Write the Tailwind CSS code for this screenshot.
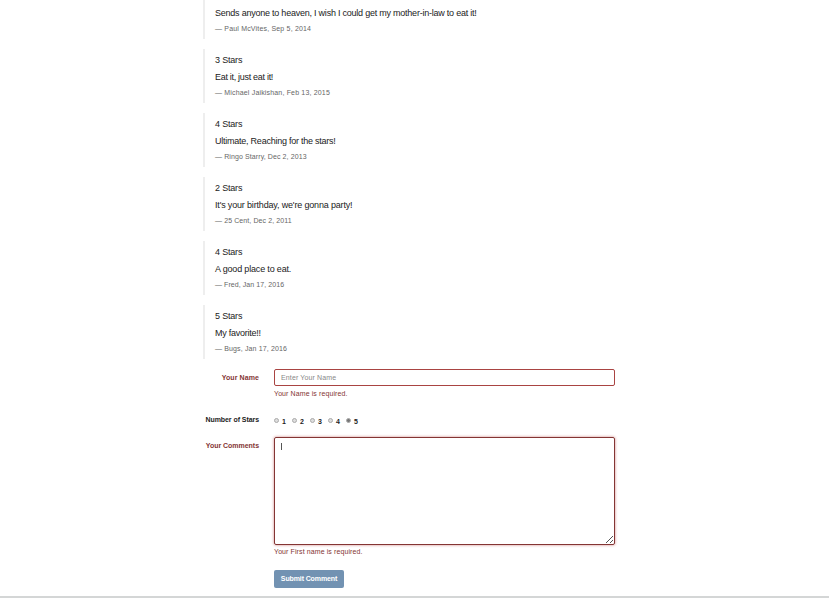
<!DOCTYPE html>
<html lang="en">
<head>
<meta charset="utf-8">
<title>Comments</title>
<script src="https://cdn.jsdelivr.net/npm/@tailwindcss/browser@4"></script>
</head>
<body class="bg-white font-['Liberation_Sans',Arial,sans-serif] text-[#222] overflow-hidden">
<main class="w-[829px] h-[598px] overflow-hidden flex flex-col">
  <section class="ml-[203px] flex flex-col gap-[10px] text-[9px] leading-[17px]">
    <blockquote class="h-[39px] border-l-2 border-[#eee] pl-[10px] pt-[5px] whitespace-nowrap"><p class="tracking-[-0.23px]">Sends anyone to heaven, I wish I could get my mother-in-law to eat it!</p><footer class="text-[7px] leading-[13px] text-[#666] tracking-[0.18px]">— Paul McVites, Sep 5, 2014</footer></blockquote>
    <blockquote class="h-[54px] border-l-2 border-[#eee] pl-[10px] pt-[3px] whitespace-nowrap"><p class="tracking-[-0.18px]">3 Stars</p><p class="tracking-[-0.3px]">Eat it, just eat it!</p><footer class="text-[7px] leading-[13px] text-[#666] tracking-[0.17px]">— Michael Jaikishan, Feb 13, 2015</footer></blockquote>
    <blockquote class="h-[54px] border-l-2 border-[#eee] pl-[10px] pt-[3px] whitespace-nowrap"><p class="tracking-[-0.18px]">4 Stars</p><p class="tracking-[-0.24px]">Ultimate, Reaching for the stars!</p><footer class="text-[7px] leading-[13px] text-[#666] tracking-[0.1px]">— Ringo Starry, Dec 2, 2013</footer></blockquote>
    <blockquote class="h-[54px] border-l-2 border-[#eee] pl-[10px] pt-[3px] whitespace-nowrap"><p class="tracking-[-0.18px]">2 Stars</p><p class="tracking-[-0.17px]">It's your birthday, we're gonna party!</p><footer class="text-[7px] leading-[13px] text-[#666] tracking-[0.1px]">— 25 Cent, Dec 2, 2011</footer></blockquote>
    <blockquote class="h-[54px] border-l-2 border-[#eee] pl-[10px] pt-[3px] whitespace-nowrap"><p class="tracking-[-0.18px]">4 Stars</p><p class="tracking-[-0.17px]">A good place to eat.</p><footer class="text-[7px] leading-[13px] text-[#666] tracking-[0.07px]">— Fred, Jan 17, 2016</footer></blockquote>
    <blockquote class="h-[54px] border-l-2 border-[#eee] pl-[10px] pt-[3px] whitespace-nowrap"><p class="tracking-[-0.18px]">5 Stars</p><p class="tracking-[-0.25px]">My favorite!!</p><footer class="text-[7px] leading-[13px] text-[#666] tracking-[0.14px]">— Bugs, Jan 17, 2016</footer></blockquote>
  </section>
  <form class="mt-[10px] flex flex-col text-[7px] leading-[10px] tracking-[0.1px]">
    <div class="flex h-[46px]">
      <label class="w-[259px] mr-[15px] pt-[4px] text-right font-bold text-[#843534]">Your Name</label>
      <div class="w-[341px]">
        <input type="text" placeholder="Enter Your Name" class="block w-full h-[17px] border border-[#a94442] rounded-[2px] px-[6px] tracking-[0.13px] outline-none placeholder:text-[#888]">
        <p class="mt-[3px] text-[#843534]">Your Name is required.</p>
      </div>
    </div>
    <div class="flex h-[22px]">
      <span class="w-[259px] mr-[15px] text-right font-bold tracking-[-0.06px]">Number of Stars</span>
      <div class="flex pt-[2px] font-bold">
        <label class="flex w-[18px]"><span class="size-[5px] mt-[1px] mr-[3px] rounded-full border border-[#aaa] bg-[#ddd]"></span>1</label>
        <label class="flex w-[18px]"><span class="size-[5px] mt-[1px] mr-[3px] rounded-full border border-[#aaa] bg-[#ddd]"></span>2</label>
        <label class="flex w-[18px]"><span class="size-[5px] mt-[1px] mr-[3px] rounded-full border border-[#aaa] bg-[#ddd]"></span>3</label>
        <label class="flex w-[18px]"><span class="size-[5px] mt-[1px] mr-[3px] rounded-full border border-[#aaa] bg-[#ddd]"></span>4</label>
        <label class="flex w-[18px]"><span class="size-[5px] mt-[1px] mr-[3px] rounded-full border border-[#aaa] bg-[#777]"></span>5</label>
      </div>
    </div>
    <div class="flex h-[133px]">
      <label class="w-[259px] mr-[15px] pt-[4px] text-right font-bold text-[#843534] tracking-[-0.03px]">Your Comments</label>
      <div class="w-[341px]">
        <div class="flex justify-between w-full h-[108px] border border-[#843534] rounded-[2px] shadow-[0_0_3px_#ce8483] pl-[6px] pt-[5px]">
          <span class="w-px h-[7px] bg-[#555]"></span>
          <svg class="self-end mr-px mb-px" width="7" height="7" viewBox="0 0 7 7" fill="none" stroke="#555"><path d="M0 7 7 0M4 7l3-3"/></svg>
        </div>
        <p class="mt-[2px] text-[#843534]">Your First name is required.</p>
      </div>
    </div>
    <button type="button" class="ml-[274px] w-[70px] h-[18px] rounded-[2px] bg-[#7292b2] text-white font-bold tracking-[-0.12px]">Submit Comment</button>
  </form>
  <hr class="mt-[8px] h-[2px] shrink-0 border-0 bg-[#d4d6d6]">
</main>
</body>
</html>
